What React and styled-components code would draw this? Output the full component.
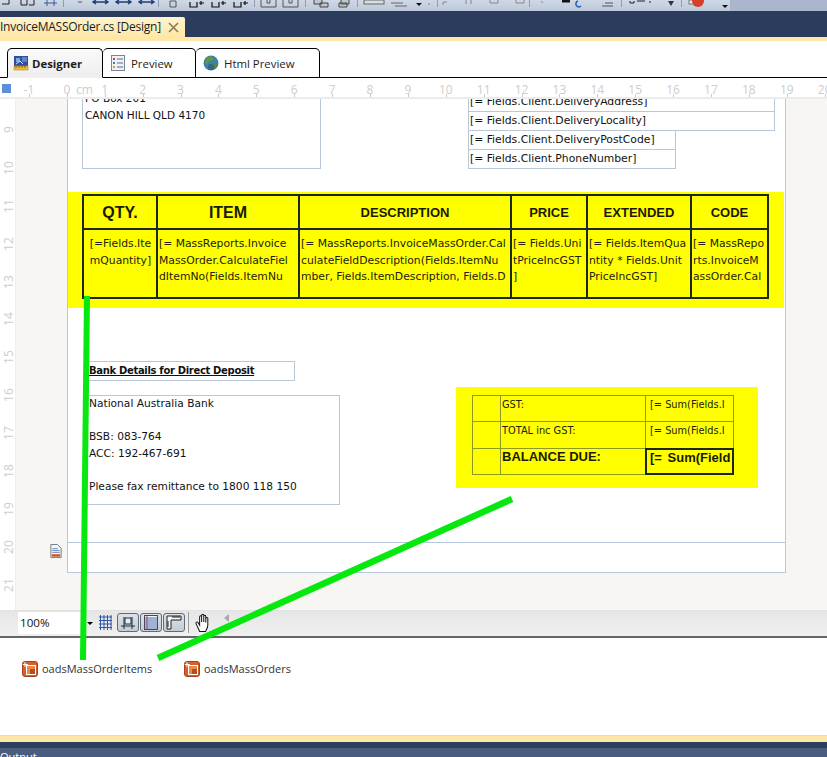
import React from "react";
import styled, { createGlobalStyle } from "styled-components";

const Global = createGlobalStyle`
  html, body { margin: 0; padding: 0; background: #fff; }
  body { font-family: "DejaVu Sans", sans-serif; }
  * { box-sizing: border-box; }
`;

const Screen = styled.div`
  position: relative;
  width: 827px;
  height: 757px;
  overflow: hidden;
  display: flex;
  flex-direction: column;
  background: #fff;
`;

const TopToolbar = styled.div`
  height: 11px;
  flex: none;
  background: linear-gradient(#a9b6cc 0 0) right / 97px 100% no-repeat, linear-gradient(#cfd8e6, #bcc8da);
  display: flex;
`;

const DocBar = styled.div`
  height: 26px;
  flex: none;
  background: #2b3c5c;
  display: flex;
  align-items: flex-end;
`;

const DocTab = styled.div`
  width: 185px;
  height: 20px;
  background: linear-gradient(#fff3cf, #ffe8a6);
  border-top-right-radius: 2px;
  color: #1c1c1c;
  font: 12px/20px "Open Sans", sans-serif;
  letter-spacing: -0.25px;
  white-space: nowrap;
  display: flex;
  align-items: center;
  justify-content: space-between;
  padding-right: 6px;
`;

const CloseGlyph = styled.svg`
  width: 11px;
  height: 11px;
  flex: none;
`;

const YellowStrip = styled.div`
  height: ${(p) => p.$h}px;
  flex: none;
  background: #ffe7a8;
`;

const TabRow = styled.div`
  height: 37px;
  flex: none;
  display: flex;
  align-items: flex-end;
  padding-left: 7px;
  background: #fff;
  border-bottom: 1px solid #000;
`;

const Tab = styled.div`
  width: ${(p) => p.$w}px;
  height: 30px;
  margin-bottom: -1px;
  display: flex;
  align-items: center;
  gap: ${(p) => (p.$active ? 3 : 5)}px;
  padding-left: ${(p) => p.$pad}px;
  border: 1px solid #000;
  border-bottom: ${(p) => (p.$active ? "1px solid #f0f0f0" : "1px solid #000")};
  border-left: ${(p) => (p.$first ? "1px solid #000" : "0")};
  border-radius: 5px 5px 0 0;
  background: ${(p) => (p.$active ? "linear-gradient(#fafafa, #eeeeee)" : "#fff")};
  color: #1e1e1e;
  font: ${(p) => (p.$active ? 700 : 400)} 11.4px "Open Sans", sans-serif;
`;

const TabIcon = styled.svg`
  width: 16px;
  height: 16px;
  flex: none;
`;

const HRuler = styled.div`
  height: 21px;
  flex: none;
  display: flex;
  padding-left: 2px;
  background: #fff;
  border-bottom: 2px solid #ececec;
  overflow: hidden;
`;

const RulerCorner = styled.div`
  width: 9px;
  height: 9px;
  margin: 6px -1px 0 0;
  flex: none;
  background: #5b8fdc;
`;

const HTick = styled.div`
  position: relative;
  width: 37.9px;
  flex: none;
  text-align: center;
  padding-top: 2px;
  font: 12px/19px "Open Sans", sans-serif;
  color: #cdcdcd;
  &::after {
    content: "";
    position: absolute;
    left: 50%;
    bottom: 0;
    height: 3px;
    width: 1px;
    background: #c9c9c9;
  }
`;

const RulerUnit = styled.span`
  position: absolute;
  left: 28px;
  top: 2px;
`;

const Workspace = styled.div`
  position: relative;
  flex: 1;
  display: flex;
  min-height: 0;
  overflow: hidden;
  background: #f8f6f2;
`;

const VRuler = styled.div`
  width: 16px;
  flex: none;
  background: #fff;
  padding-top: 12px;
  border-right: 1px solid #efefef;
`;

const VTick = styled.div`
  height: 37.9px;
  display: flex;
  align-items: center;
  justify-content: center;
  font: 12px "Open Sans", sans-serif;
  color: #cdcdcd;
  writing-mode: vertical-rl;
  transform: rotate(180deg);
`;

const Gutter = styled.div`
  position: relative;
  width: 51px;
  flex: none;
`;

const SectionIcon = styled.svg`
  position: absolute;
  left: 34px;
  top: 445px;
  width: 12px;
  height: 14px;
`;

const Sheet = styled.div`
  position: relative;
  width: 719px;
  height: 474px;
  flex: none;
  background: #fff;
  border: solid #b6c7df;
  border-width: 0 1px 1px 1px;
`;

const SectionRule = styled.div`
  position: absolute;
  left: 0;
  right: 0;
  top: 443px;
  height: 1px;
  background: #b6c7df;
`;

const Placed = styled.div`
  position: absolute;
  left: ${(p) => p.$x - 68}px;
  top: ${(p) => p.$y - 99}px;
  width: ${(p) => p.$w}px;
  height: ${(p) => p.$h}px;
`;

const TextBox = styled(Placed)`
  border: 1px solid #b8c8da;
  overflow: hidden;
  padding: ${(p) => p.$pad || "0 0 0 1px"};
  color: #111;
  font: ${(p) => p.$size || 10.8}px/${(p) => p.$lh || 17}px "DejaVu Sans", sans-serif;
  white-space: pre;
`;

const BankTitle = styled(TextBox)`
  font-weight: 700;
  text-decoration: underline;
  letter-spacing: -0.32px;
`;

const YellowBand = styled(Placed)`
  background: #ffff00;
`;

const ItemsTable = styled(Placed)`
  display: grid;
  grid-template-columns: 74px 142px 212px 76px 104px 77px;
  grid-template-rows: 34px 69px;
  border-top: 2px solid #1b2a16;
  border-left: 2px solid #1b2a16;
`;

const HeadCell = styled.div`
  border-right: 2px solid #1b2a16;
  border-bottom: 2px solid #1b2a16;
  display: flex;
  align-items: center;
  justify-content: center;
  padding-top: 1px;
  color: #1a1a00;
  font: 700 ${(p) => p.$size}px "Liberation Sans", sans-serif;
`;

const BodyCell = styled.div`
  border-right: 2px solid #1b2a16;
  border-bottom: 2px solid #1b2a16;
  padding: 6px 0 0 1px;
  color: #22220a;
  font: 10.8px/16.5px "DejaVu Sans", sans-serif;
  white-space: pre;
  overflow: hidden;
  text-align: ${(p) => (p.$center ? "center" : "left")};
`;

const TotalsTable = styled(Placed)`
  display: grid;
  grid-template-columns: 28px 145px 88px;
  grid-template-rows: 26px 27px 26px;
  border-top: 1px solid #8c9a22;
  border-left: 1px solid #8c9a22;
`;

const TotalCell = styled.div`
  border-right: ${(p) => (p.$strong ? "2px solid #1b2a16" : "1px solid #8c9a22")};
  border-bottom: ${(p) => (p.$strong ? "2px solid #1b2a16" : "1px solid #8c9a22")};
  border-top: ${(p) => (p.$strong ? "2px solid #1b2a16" : "0")};
  border-left: ${(p) => (p.$strong ? "2px solid #1b2a16" : "0")};
  margin-top: ${(p) => (p.$strong ? "-1px" : "0")};
  margin-left: ${(p) => (p.$strong ? "-1px" : "0")};
  padding: ${(p) => p.$pad || "1px 0 0 1px"};
  font: 9.8px/15px "DejaVu Sans", sans-serif;
  color: #22220a;
  overflow: hidden;
  white-space: nowrap;
`;

const BigTotal = styled.span`
  display: block;
  font: 700 13px/15px "Liberation Sans", sans-serif;
  color: #1a1a00;
  word-spacing: ${(p) => p.$gap || 0}px;
`;

const BottomToolbar = styled.div`
  height: 28px;
  flex: none;
  display: flex;
  align-items: flex-start;
  background: linear-gradient(#e6e6e6, #f0f0f0);
  border-top: 1px solid #e2e2e2;
  border-bottom: 2px solid #666;
  padding-left: 18px;
`;

const ZoomCombo = styled.div`
  width: 67px;
  height: 22px;
  margin-top: 1px;
  background: #fff;
  font: 11.6px/22px "Open Sans", sans-serif;
  color: #111;
  padding-left: 2px;
  flex: none;
`;

const ComboArrow = styled.div`
  width: 0;
  height: 0;
  flex: none;
  margin: 11px 0 0 2px;
  border: 3px solid transparent;
  border-top: 3px solid #000;
`;

const ToolIcon = styled.svg`
  width: ${(p) => p.$w || 15}px;
  height: ${(p) => p.$h || 16}px;
  flex: none;
  margin: ${(p) => p.$mt || 3}px 0 0 ${(p) => p.$ml || 0}px;
`;

const ToggleButton = styled.div`
  width: 22px;
  height: 19px;
  flex: none;
  margin: 2px 0 0 ${(p) => p.$ml || 1}px;
  border: 1px solid #5f6b78;
  border-radius: 3px;
  background: linear-gradient(#dbe3ea, #c4ccd4);
  display: flex;
  align-items: center;
  justify-content: center;
`;

const ToolSep = styled.div`
  width: 1px;
  height: 21px;
  flex: none;
  margin: 1px 0 0 3px;
  background: #9a9a9a;
`;

const ScrollArrow = styled.div`
  width: 0;
  height: 0;
  flex: none;
  margin: 3px 0 0 12px;
  border: 4px solid transparent;
  border-left: 0;
  border-right: 5px solid #a9a9a9;
`;

const Tray = styled.div`
  height: 98px;
  flex: none;
  padding: 22px 0 0 22px;
  display: flex;
  align-items: flex-start;
  background: #fff;
  border-bottom: 1px solid #dcdcdc;
`;

const TrayItem = styled.div`
  display: flex;
  align-items: center;
  gap: 4px;
  width: 162px;
  font: 11px/18px "Open Sans", sans-serif;
  color: #333;
`;

const TrayIcon = styled.svg`
  width: 16px;
  height: 16px;
  flex: none;
`;

const OutputBar = styled.div`
  height: 15px;
  flex: none;
  background: linear-gradient(#2c3f60 0 6px, #4a5d80 6px);
  color: #fff;
  font: 11px/1 "Open Sans", sans-serif;
  padding: 9px 0 0 0;
  overflow: hidden;
`;

const Annotation = styled.svg`
  position: absolute;
  left: 0;
  top: 0;
  width: 827px;
  height: 757px;
  pointer-events: none;
`;

const StripArt = styled.svg`
  width: 730px;
  height: 11px;
  flex: none;
`;

const Navy = "#1f3c7a";

function ToolbarArt() {
  const arrows = [93, 116, 139];
  const seps = [63, 158, 254, 305, 357, 437, 529, 621, 681];
  return (
    <StripArt viewBox="0 0 730 11">
      {seps.map((x) => (
        <rect key={x} x={x} y="0" width="1" height="7" fill="#8f9bb0" />
      ))}
      <path d="M2 4h7v-4M21 0v5h6v-5M29 5h5v-5" fill="none" stroke="#222" />
      <path d="M44 3h13M47 0v6M54 0v6" fill="none" stroke="#3a5a9a" />
      {arrows.map((x) => (
        <path key={x} d={`M${x} 2h15M${x + 3} 0l-3 2 3 2M${x + 12} 0l3 2-3 2`} fill="none" stroke={Navy} strokeWidth="1.4" />
      ))}
      <path d="M78 2h4" stroke="#555" />
      <path d="M170 1h6v6h-6z" fill="none" stroke="#555" />
      {[190, 212, 234].map((x) => (
        <path key={x} d={`M${x} 2v5h7v-5M${x + 9} 3h5M${x + 11} 1v4`} fill="none" stroke="#111" strokeWidth="1.2" />
      ))}
      {[261, 283].map((x) => (
        <path key={x} d={`M${x} 0v7h15v-7M${x + 6} 0v3h3v-3`} fill="none" stroke="#555" />
      ))}
      <path d="M314 0v4h8v-4M320 3h8v4h-8z" fill="#c0c6d0" stroke="#444" />
      <path d="M341 0v4h8v-4M339 3h8v4h-8z" fill="#c0c6d0" stroke="#444" />
      <rect x="364" y="0" width="20" height="4" fill="#d8dce4" stroke="#666" />
      <path d="M391 3h12M395 6h12" stroke="#666" />
      <path d="M416 3h6l-3 3z" fill="#111" />
      <path d="M428 4h2M443 2h4M443 2v3M466 0v4M471 0v4M490 0v3h8v-3M516 0v3h8v-3" fill="none" stroke="#888" />
      <path d="M541 1l2 2" stroke="#888" />
      <rect x="562" y="0" width="8" height="2.5" fill="#111" />
      <path d="M578 1a3 3 0 1 0 3 5" fill="none" stroke="#2a60c0" strokeWidth="1.6" />
      <path d="M605 3h8M602 6h11" stroke="#555" />
      <path d="M630 1v2h4v-2M637 1h8M650 1v2" fill="none" stroke="#222" />
      <path d="M668 1h6l-3 5z" fill="#333" />
      <rect x="689" y="0" width="10" height="4" fill="#e8eaf0" stroke="#777" />
      <circle cx="698" cy="1" r="6" fill="#d6402a" />
      <path d="M722 5h6l-3 3z" fill="#111" />
    </StripArt>
  );
}

const Fields = [
  ["QTY.", 16],
  ["ITEM", 16],
  ["DESCRIPTION", 13],
  ["PRICE", 13],
  ["EXTENDED", 13],
  ["CODE", 13],
];

const Bodies = [
  { t: "[=Fields.Ite\nmQuantity]", c: true },
  { t: "[= MassReports.Invoice\nMassOrder.CalculateFiel\ndItemNo(Fields.ItemNu" },
  { t: "[= MassReports.InvoiceMassOrder.Cal\nculateFieldDescription(Fields.ItemNu\nmber, Fields.ItemDescription, Fields.D" },
  { t: "[= Fields.Uni\ntPriceIncGST\n]" },
  { t: "[= Fields.ItemQua\nntity * Fields.Unit\nPriceIncGST]" },
  { t: "[= MassRepo\nrts.InvoiceM\nassOrder.Cal" },
];

const hTicks = [-1, 0, 1, 2, 3, 4, 5, 6, 7, 8, 9, 10, 11, 12, 13, 14, 15, 16, 17, 18, 19, 20];
const vTicks = [9, 10, 11, 12, 13, 14, 15, 16, 17, 18, 19, 20, 21];

function DataSourceIcon() {
  return (
    <TrayIcon viewBox="0 0 16 16">
      <rect x="0.5" y="0.5" width="15" height="15" rx="2.5" fill="#d4602a" stroke="#a8431a" />
      <rect x="4.5" y="4.5" width="9" height="9" fill="#e88a4e" stroke="#fff" />
      <rect x="8" y="8" width="5" height="5" fill="#b84c1e" />
      <path d="M3 1v5M.8 3.5h5" stroke="#fff" />
    </TrayIcon>
  );
}

export default function App() {
  return (
    <Screen>
      <Global />
      <TopToolbar>
        <ToolbarArt />
      </TopToolbar>
      <DocBar>
        <DocTab>
          InvoiceMASSOrder.cs [Design]
          <CloseGlyph viewBox="0 0 11 11">
            <path d="M1 1l9 9M10 1l-9 9" stroke="#8a7a5a" strokeWidth="1.6" />
          </CloseGlyph>
        </DocTab>
      </DocBar>
      <YellowStrip $h={4} />
      <TabRow>
        <Tab $w={96} $pad={5} $active $first>
          <TabIcon viewBox="0 0 16 16">
            <rect x="1" y="1" width="14" height="10" fill="#2d4f9e" />
            <rect x="3" y="3" width="4" height="4" fill="#7fa4e0" />
            <rect x="9" y="2" width="5" height="5" fill="#5f82c8" />
            <path d="M3 9l4-3 3 3" fill="none" stroke="#d6e0f4" />
            <rect x="1" y="11" width="14" height="4" fill="#efbd3c" stroke="#b98b20" strokeWidth="0.6" />
            <path d="M3 11v2M6 11v2M9 11v2M12 11v2" stroke="#7b5a10" />
          </TabIcon>
          Designer
        </Tab>
        <Tab $w={93} $pad={7}>
          <TabIcon viewBox="0 0 16 16">
            <rect x="1.5" y="0.5" width="13" height="15" fill="#eef2f8" stroke="#7a8596" />
            <rect x="3" y="3" width="2" height="2" fill="#c8402a" />
            <rect x="3" y="7" width="2" height="2" fill="#3a7ac8" />
            <rect x="3" y="11" width="2" height="2" fill="#d8a020" />
            <path d="M7 4h6M7 8h6M7 12h6" stroke="#5a6a86" />
          </TabIcon>
          Preview
        </Tab>
        <Tab $w={124} $pad={7}>
          <TabIcon viewBox="0 0 16 16">
            <circle cx="8" cy="8" r="7.5" fill="#3f7fa8" />
            <path d="M3 4c2-3 6-3 7-1s-1 3-3 3-1 3-3 3-2-3-1-5z" fill="#5c9a44" />
            <path d="M9 9c2-1 5-1 5 1s-2 4-3 4-1-3-2-5z" fill="#4f8a3c" />
            <circle cx="8" cy="12" r="3" fill="#1e4d72" opacity="0.5" />
          </TabIcon>
          Html Preview
        </Tab>
      </TabRow>
      <HRuler>
        <RulerCorner />
        {hTicks.map((n) => (
          <HTick key={n}>
            {n}
            {n === 0 && <RulerUnit>cm</RulerUnit>}
          </HTick>
        ))}
      </HRuler>
      <Workspace>
        <VRuler>
          {vTicks.map((n) => (
            <VTick key={n}>{n}</VTick>
          ))}
        </VRuler>
        <Gutter>
          <SectionIcon viewBox="0 0 12 15">
            <path d="M.5.5h7l4 4v10h-11z" fill="#f2f4f8" stroke="#6a7484" />
            <path d="M2 5h6M2 7h8M2 9h8" stroke="#6a8ab8" />
            <rect x="1.5" y="11" width="9" height="2.5" fill="#c8501a" />
          </SectionIcon>
        </Gutter>
        <Sheet>
          <SectionRule />
          <TextBox $x={82} $y={89} $w={239} $h={80} $pad="0 0 0 2px" $size={10.5}>
            {"PO Box 201\nCANON HILL QLD 4170"}
          </TextBox>
          <TextBox $x={468} $y={92} $w={307} $h={20}>[= Fields.Client.DeliveryAddress]</TextBox>
          <TextBox $x={468} $y={111} $w={307} $h={20}>[= Fields.Client.DeliveryLocality]</TextBox>
          <TextBox $x={468} $y={130} $w={208} $h={20}>[= Fields.Client.DeliveryPostCode]</TextBox>
          <TextBox $x={468} $y={149} $w={208} $h={20}>[= Fields.Client.PhoneNumber]</TextBox>

          <YellowBand $x={68} $y={192} $w={716} $h={116} />
          <ItemsTable $x={82} $y={194} $w={687} $h={105}>
            {Fields.map(([label, size]) => (
              <HeadCell key={label} $size={size}>{label}</HeadCell>
            ))}
            {Bodies.map((b) => (
              <BodyCell key={b.t} $center={b.c}>{b.t}</BodyCell>
            ))}
          </ItemsTable>

          <BankTitle $x={85} $y={361} $w={210} $h={20} $pad="0 0 0 3px" $size={10}>Bank Details for Direct Deposit</BankTitle>
          <TextBox $x={85} $y={395} $w={255} $h={110} $pad="0 0 0 3px" $size={10.65} $lh={16.5}>
            {"National Australia Bank\n\nBSB: 083-764\nACC: 192-467-691\n\nPlease fax remittance to 1800 118 150"}
          </TextBox>

          <YellowBand $x={456} $y={387} $w={302} $h={101} />
          <TotalsTable $x={472} $y={395} $w={262} $h={80}>
            <TotalCell />
            <TotalCell>GST:</TotalCell>
            <TotalCell $pad="1px 0 0 4px">[= Sum(Fields.I</TotalCell>
            <TotalCell />
            <TotalCell>TOTAL inc GST:</TotalCell>
            <TotalCell $pad="1px 0 0 4px">[= Sum(Fields.I</TotalCell>
            <TotalCell />
            <TotalCell $pad="0 0 0 1px"><BigTotal>BALANCE DUE:</BigTotal></TotalCell>
            <TotalCell $strong $pad="0 0 0 3px"><BigTotal $gap={2}>[= Sum(Field</BigTotal></TotalCell>
          </TotalsTable>
        </Sheet>
      </Workspace>
      <BottomToolbar>
        <ZoomCombo>100%</ZoomCombo>
        <ComboArrow />
        <ToolIcon viewBox="0 0 15 16" $ml={5} $w={15}>
          <path d="M1 3h13M1 6.5h13M1 10h13M1 13.5h13M2.500 1v15M6 1v15M9.500 1v15M13 1v15" stroke="#2f55a8" />
        </ToolIcon>
        <ToggleButton $ml={4}>
          <svg width="16" height="15" viewBox="0 0 16 15">
            <path d="M1 11h14M4 2v12M12 2v12" stroke="#1f2a3a" />
            <rect x="5" y="3" width="6" height="6" fill="#e8eef6" stroke="#1f2a3a" />
          </svg>
        </ToggleButton>
        <ToggleButton>
          <svg width="16" height="15" viewBox="0 0 16 15">
            <rect x="1.500" y="0.5" width="13" height="14" fill="#f4f6fa" stroke="#3a4a6a" />
            <path d="M2 3h12M2 5h12M2 7h12M2 9h12M2 11h12M2 13h12" stroke="#4a6ab8" />
            <path d="M4 1v13" stroke="#c84030" />
          </svg>
        </ToggleButton>
        <ToggleButton>
          <svg width="16" height="15" viewBox="0 0 16 15">
            <path d="M1 1h14v4H5v9H1z" fill="#f4f4f4" stroke="#222" />
            <path d="M7 1v2M9 1v2M11 1v2M13 1v2M1 7h2M1 9h2M1 11h2" stroke="#222" />
          </svg>
        </ToggleButton>
        <ToolSep />
        <ToolIcon viewBox="0 0 14 17" $ml={5} $w={18} $h={19} $mt={2}>
          <path d="M4 16.500 .8 9.500c-.5-1.200.9-2 1.700-1L4 11V3.500c0-1.300 1.800-1.300 1.800 0V8V2.200c0-1.300 1.900-1.300 1.900 0V8V3c0-1.300 1.800-1.300 1.800 0v5.500V5c0-1.200 1.800-1.200 1.800 0v6c0 2-1 3.500-2 5.500z" fill="#fff" stroke="#111" strokeWidth="0.9" />
        </ToolIcon>
        <ScrollArrow />
      </BottomToolbar>
      <Tray>
        <TrayItem>
          <DataSourceIcon />
          oadsMassOrderItems
        </TrayItem>
        <TrayItem>
          <DataSourceIcon />
          oadsMassOrders
        </TrayItem>
      </Tray>
      <YellowStrip $h={6} />
      <OutputBar>Output</OutputBar>
      <Annotation viewBox="0 0 827 757">
        <path d="M87 296 83 660" stroke="#07e80f" strokeWidth="6" />
        <path d="M158 658 512 499" stroke="#07e80f" strokeWidth="6.500" />
      </Annotation>
    </Screen>
  );
}
